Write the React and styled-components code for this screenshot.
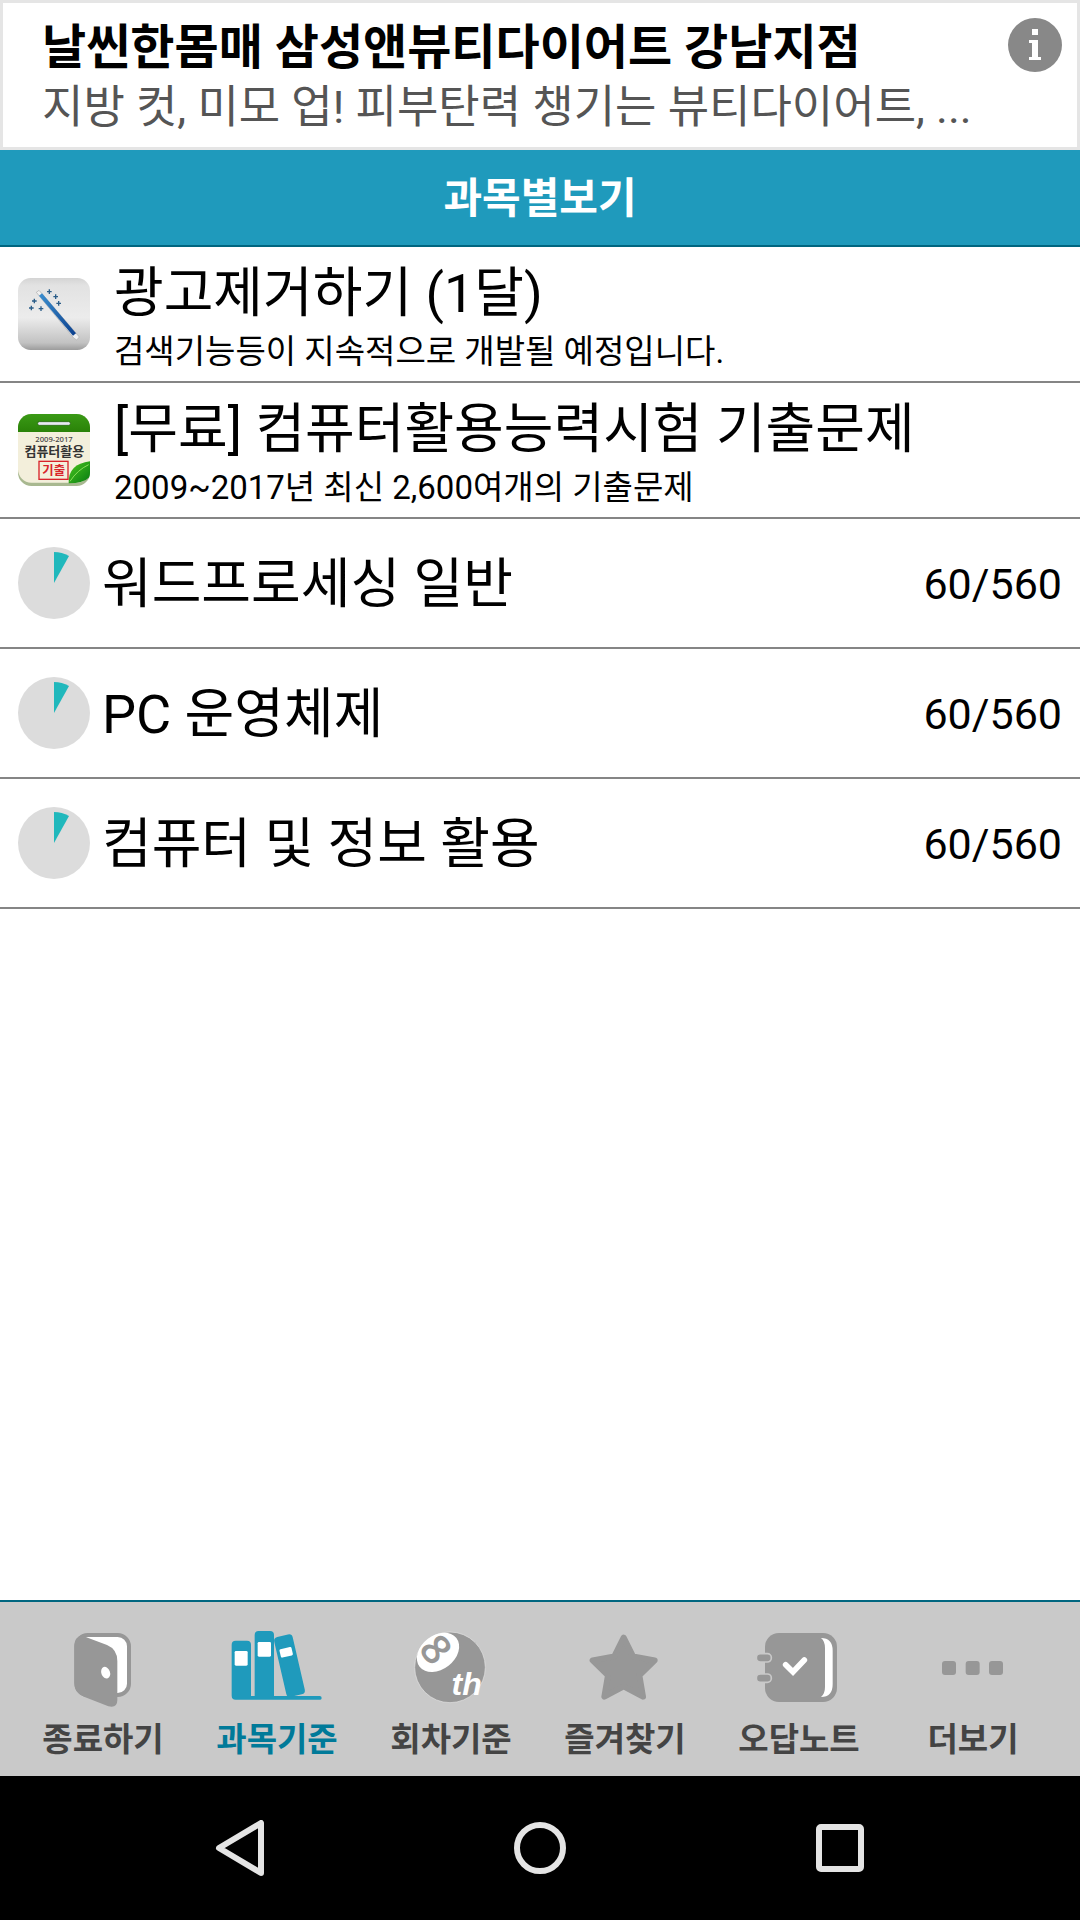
import React from "react";
import styled, { createGlobalStyle } from "styled-components";

const GlobalStyle = createGlobalStyle`
	* { box-sizing: border-box; }
	body { margin: 0; background: #fff; }
`;

const Screen = styled.div`
	display: flex;
	flex-direction: column;
	min-height: 100vh;
	font-family: Roboto, "Noto Sans CJK KR", sans-serif;
	color: #000;
`;

const AdBanner = styled.aside`
	display: flex;
	justify-content: space-between;
	align-items: flex-start;
	height: 150px;
	padding: 15px 15px 0 39px;
	border: 3px solid #e5e5e5;
`;

const AdTitle = styled.div`
	font-size: 48px;
	line-height: 60px;
	font-weight: 700;
`;

const AdText = styled.div`
	font-size: 45px;
	line-height: 60px;
	color: #555;
`;

const InfoButton = styled.button`
	padding: 0;
	border: 0;
	background: none;
	line-height: 0;
`;

const Header = styled.header`
	height: 97px;
	background: #1f9abc;
	border-bottom: 2px solid #006680;
`;

const HeaderTitle = styled.h1`
	margin: 0;
	font-size: 42px;
	line-height: 97px;
	font-weight: 700;
	text-align: center;
	color: #fff;
`;

const List = styled.main`
	flex: 1;
`;

const Row = styled.a`
	display: flex;
	align-items: center;
	gap: ${(p) => (p.$promo ? 24 : 12)}px;
	height: ${(p) => (p.$promo ? 136 : 130)}px;
	padding: 0 18px;
	border-bottom: 2px solid #858585;
	color: inherit;
	text-decoration: none;
`;

const RowBody = styled.div`
	flex: 1;
	padding-top: 4px;
`;

const RowTitle = styled.div`
	font-size: 54px;
	line-height: 72px;
`;

const RowSub = styled.div`
	font-size: 33px;
	line-height: 44px;
`;

const Count = styled.div`
	padding-top: 2px;
	font-size: 43px;
	line-height: 60px;
`;

const TabBar = styled.nav`
	display: flex;
	height: 176px;
	padding: 0 20px 0 16px;
	background: #c9c9c9;
	border-top: 2px solid #006680;
`;

const Tab = styled.button`
	display: flex;
	flex: 1;
	flex-direction: column;
	align-items: center;
	padding: 26px 0 0;
	border: 0;
	background: none;
	font: inherit;
	font-size: 33px;
	line-height: 64px;
	font-weight: 700;
	color: ${(p) => (p.$active ? "#007a99" : "#444")};
`;

const TabIcon = styled.svg`
	flex: none;
	width: 100px;
	height: 80px;
	overflow: visible;
`;

const SystemBar = styled.div`
	display: flex;
	justify-content: center;
	height: 144px;
	background: #000;
`;

const SystemButton = styled.button`
	display: flex;
	align-items: center;
	justify-content: center;
	width: 300px;
	padding: 0;
	border: 0;
	background: none;
`;

const InfoIcon = () => (
	<svg width="54" height="54" viewBox="0 0 54 54">
		<circle cx="27" cy="27" r="27" fill="#888" />
		<path d="M24 11h6v6h-6zM21 22h9v17h3v3H21v-3h3V25h-3z" fill="#fff" />
	</svg>
);

const WandIcon = () => (
	<svg width="72" height="72" viewBox="0 0 216 216">
		<defs>
			<linearGradient id="tile" x1="0" y1="0" x2="0" y2="1">
				<stop offset="0" stopColor="#d4d4d4" />
				<stop offset="0.1" stopColor="#e2e2e2" />
				<stop offset="0.55" stopColor="#ececec" />
				<stop offset="0.9" stopColor="#c2c2c2" />
				<stop offset="1" stopColor="#9c9c9c" />
			</linearGradient>
			<linearGradient id="wand" x1="0" y1="0" x2="1" y2="1">
				<stop offset="0" stopColor="#3b8fd0" />
				<stop offset="1" stopColor="#0c3f8c" />
			</linearGradient>
		</defs>
		<rect width="216" height="216" rx="38" fill="url(#tile)" />
		<path d="M55 43l8-6 9 10 112 130-8 9-9-6z" fill="#f0f0f0" stroke="#aaa" strokeWidth="2" />
		<path d="M63 53l9-7 102 120-9 7z" fill="url(#wand)" />
		<path
			d="M94 34v14M87 41h14M113 49v14M106 56h14M122 69v14M115 76h14M49 62v14M42 69h14M40 83v14M33 90h14M69 85v14M62 92h14"
			stroke="#2b5d88"
			strokeWidth="4"
		/>
	</svg>
);

const CalendarIcon = () => (
	<svg width="72" height="72" viewBox="54 42 216 216">
		<defs>
			<clipPath id="card">
				<rect x="54" y="42" width="216" height="216" rx="40" />
			</clipPath>
			<linearGradient id="green" x1="0" y1="0" x2="0" y2="1">
				<stop offset="0" stopColor="#3a9a16" />
				<stop offset="1" stopColor="#2a8208" />
			</linearGradient>
			<linearGradient id="leaf" x1="0" y1="0" x2="1" y2="1">
				<stop offset="0" stopColor="#4cc81e" />
				<stop offset="1" stopColor="#067a12" />
			</linearGradient>
		</defs>
		<g clipPath="url(#card)">
			<rect x="54" y="42" width="216" height="216" fill="#a8b890" />
			<rect x="54" y="42" width="216" height="206" rx="40" fill="#f3efdb" />
			<path d="M54 42h216v54H54z" fill="url(#green)" />
			<path d="M206 250q-2-58 64-66v46q-20 20-64 20z" fill="url(#leaf)" />
			<path d="M210 244q22-34 56-50" stroke="#8be05a" strokeWidth="3" fill="none" />
		</g>
		<rect x="113" y="65" width="98" height="11" rx="5" fill="#e8e8f4" stroke="#1d5c08" strokeWidth="2" />
		<text x="162" y="126" fontSize="23" fontWeight="500" textAnchor="middle" fill="#444" fontFamily="Noto Sans, sans-serif">2009-2017</text>
		<text x="163" y="168" fontSize="39" fontWeight="700" textAnchor="middle" fill="#333">컴퓨터활용</text>
		<rect x="117" y="184" width="87" height="54" fill="none" stroke="#d8232a" strokeWidth="4" />
		<text x="161" y="224" fontSize="37" fontWeight="700" textAnchor="middle" fill="#d8232a">기출</text>
	</svg>
);

const ProgressPie = () => (
	<svg width="72" height="72" viewBox="0 0 72 72">
		<circle cx="36" cy="36" r="36" fill="#dcdcdc" />
		<path d="M36 36V5a31 31 0 0 1 15 4z" fill="#20b8bc" />
	</svg>
);

const DoorIcon = () => (
	<TabIcon viewBox="158 114 300 240">
		<rect x="228" y="135" width="158" height="180" rx="34" fill="#fff" stroke="#979797" strokeWidth="12" />
		<path
			d="M256 141l64 24q31 13 31 48v118q0 24-27 18l-73-29q-29-12-29-42V168q0-28 26-34z"
			fill="#979797"
		/>
		<ellipse cx="316" cy="248" rx="13" ry="18" transform="rotate(-20 316 248)" fill="#fff" />
	</TabIcon>
);

const BooksIcon = () => (
	<TabIcon viewBox="681 114 300 240">
		<g fill="#1f9abc">
			<path d="M695 164q0-12 12-12h34q12 0 12 12v154h11V135q0-12 12-12h34q12 0 12 12v183h137q6 0 6 6t-6 5H707q-12 0-12-12z" />
			<rect x="840" y="135" width="57" height="184" rx="12" transform="rotate(-13 868 227)" />
		</g>
		<g fill="#fff">
			<rect x="704" y="183" width="39" height="44" rx="4" />
			<rect x="773" y="156" width="40" height="44" rx="4" />
			<rect x="840" y="174" width="37" height="26" rx="4" transform="rotate(-13 858 187)" />
		</g>
	</TabIcon>
);

const BallIcon = () => (
	<TabIcon viewBox="123 114 300 240">
		<circle cx="270" cy="232" r="106" fill="#979797" stroke="#e4e4e4" strokeWidth="2" />
		<ellipse cx="234" cy="187" rx="70" ry="51" transform="rotate(-38 234 187)" fill="#fff" />
		<text
			x="228"
			y="221"
			fontSize="122"
			fontWeight="600"
			fontFamily="Open Sans, sans-serif"
			textAnchor="middle"
			transform="rotate(50 228 178)"
			fill="#979797"
		>
			8
		</text>
		<text
			x="320"
			y="314"
			fontSize="96"
			fontWeight="700"
			fontStyle="italic"
			fontFamily="Liberation Sans, sans-serif"
			textAnchor="middle"
			fill="#fff"
		>
			th
		</text>
	</TabIcon>
);

const StarIcon = () => (
	<TabIcon viewBox="645 114 300 240">
		<path
			d="M791 143l28 56 65 12-46 45 11 64-58-31-58 31 11-64-46-45 65-12z"
			fill="#979797"
			stroke="#979797"
			strokeWidth="18"
			strokeLinejoin="round"
		/>
	</TabIcon>
);

const NoteIcon = () => (
	<TabIcon viewBox="87 114 300 240">
		<rect x="135" y="129" width="216" height="207" rx="42" fill="#979797" />
		<path d="M303 144q35 0 35 38v101q0 38-35 38 12-10 12-30V174q0-20-12-30z" fill="#fff" />
		<g fill="#979797" stroke="#c9c9c9" strokeWidth="5">
			<rect x="109" y="191" width="45" height="25" rx="12" />
			<rect x="109" y="252" width="45" height="25" rx="12" />
		</g>
		<path d="M197 224l22 22 34-36" fill="none" stroke="#fff" strokeWidth="17" strokeLinecap="round" />
	</TabIcon>
);

const MoreIcon = () => (
	<TabIcon viewBox="609 114 300 240" fill="#979797">
		<rect x="666" y="213" width="42" height="42" rx="9" />
		<rect x="737" y="213" width="42" height="42" rx="9" />
		<rect x="807" y="213" width="42" height="42" rx="9" />
	</TabIcon>
);

const promos = [
	{ title: "광고제거하기 (1달)", sub: "검색기능등이 지속적으로 개발될 예정입니다.", Icon: WandIcon },
	{ title: "[무료] 컴퓨터활용능력시험 기출문제", sub: "2009~2017년 최신 2,600여개의 기출문제", Icon: CalendarIcon },
];

const subjects = [
	{ title: "워드프로세싱 일반", count: "60/560" },
	{ title: "PC 운영체제", count: "60/560" },
	{ title: "컴퓨터 및 정보 활용", count: "60/560" },
];

const tabs = [
	{ label: "종료하기", Icon: DoorIcon },
	{ label: "과목기준", Icon: BooksIcon, active: true },
	{ label: "회차기준", Icon: BallIcon },
	{ label: "즐겨찾기", Icon: StarIcon },
	{ label: "오답노트", Icon: NoteIcon },
	{ label: "더보기", Icon: MoreIcon },
];

export default function App() {
	return (
		<>
			<GlobalStyle />
			<Screen>
				<AdBanner>
					<div>
						<AdTitle>날씬한몸매 삼성앤뷰티다이어트 강남지점</AdTitle>
						<AdText>지방 컷, 미모 업! 피부탄력 챙기는 뷰티다이어트, ...</AdText>
					</div>
					<InfoButton aria-label="광고 정보">
						<InfoIcon />
					</InfoButton>
				</AdBanner>
				<Header>
					<HeaderTitle>과목별보기</HeaderTitle>
				</Header>
				<List>
					{promos.map(({ title, sub, Icon }) => (
						<Row key={title} href="#" $promo>
							<Icon />
							<RowBody>
								<RowTitle>{title}</RowTitle>
								<RowSub>{sub}</RowSub>
							</RowBody>
						</Row>
					))}
					{subjects.map(({ title, count }) => (
						<Row key={title} href="#">
							<ProgressPie />
							<RowBody>
								<RowTitle>{title}</RowTitle>
							</RowBody>
							<Count>{count}</Count>
						</Row>
					))}
				</List>
				<TabBar>
					{tabs.map(({ label, Icon, active }) => (
						<Tab key={label} $active={active}>
							<Icon />
							{label}
						</Tab>
					))}
				</TabBar>
				<SystemBar>
					<SystemButton aria-label="뒤로">
						<svg width="50" height="56" viewBox="0 0 50 56" fill="none" stroke="#e4e4e4" strokeWidth="6" strokeLinejoin="round">
							<path d="M46 3v50L4 28z" />
						</svg>
					</SystemButton>
					<SystemButton aria-label="홈">
						<svg width="52" height="52" viewBox="0 0 52 52" fill="none" stroke="#e4e4e4" strokeWidth="6">
							<circle cx="26" cy="26" r="23" />
						</svg>
					</SystemButton>
					<SystemButton aria-label="최근 앱">
						<svg width="48" height="48" viewBox="0 0 48 48" fill="none" stroke="#e4e4e4" strokeWidth="6">
							<rect x="3" y="3" width="42" height="42" rx="2" />
						</svg>
					</SystemButton>
				</SystemBar>
			</Screen>
		</>
	);
}
